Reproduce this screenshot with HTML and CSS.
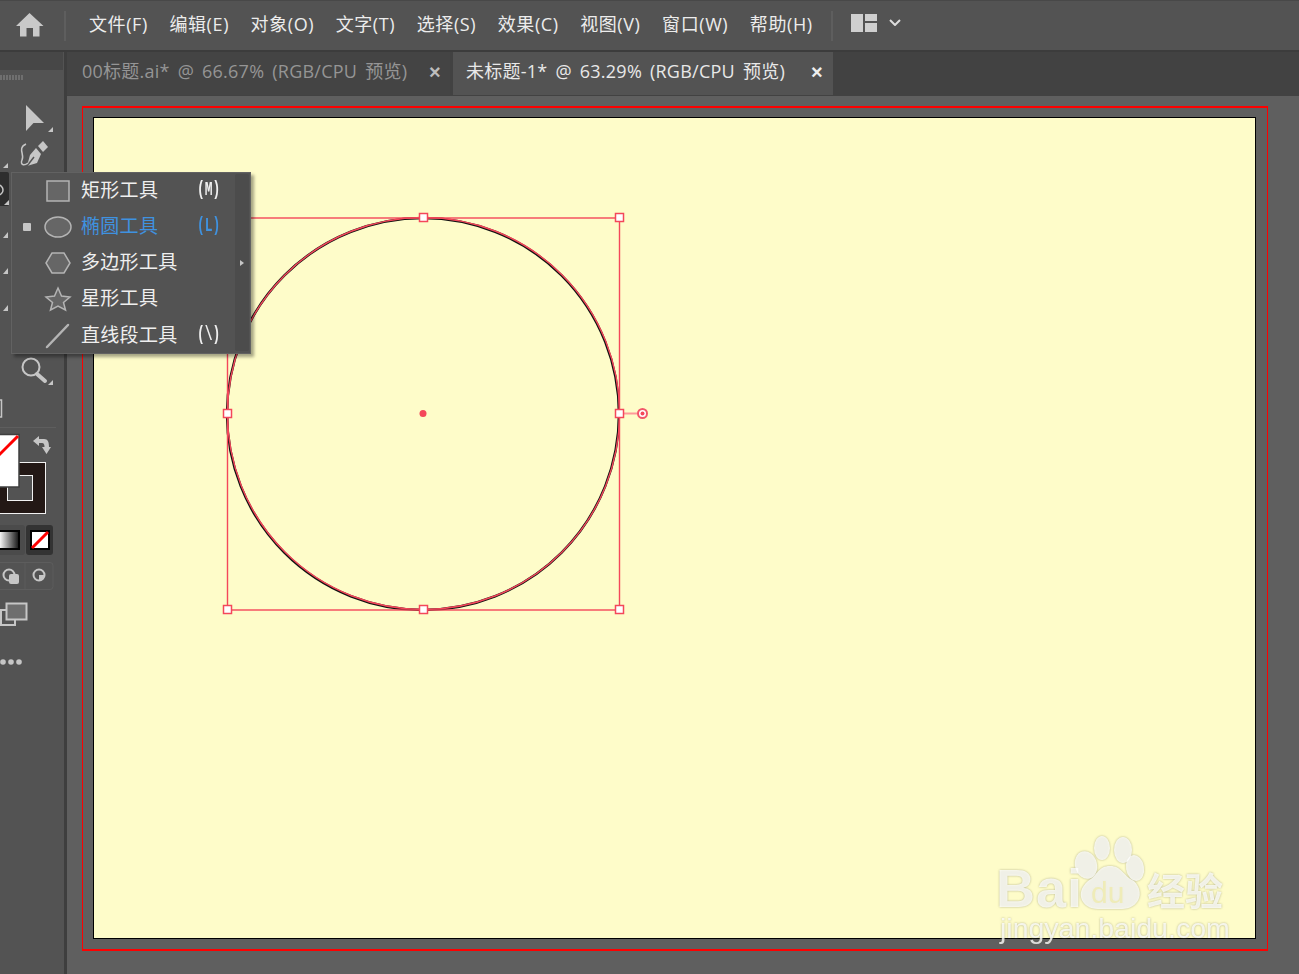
FILE: index.html
```html
<!DOCTYPE html>
<html lang="zh-CN">
<head>
    <meta charset="UTF-8">
    <title>Adobe Illustrator</title>
    <link rel="stylesheet" href="styles.css">
</head>
<body>
<header class="menubar">
    <svg class="home" viewBox="0 0 28 24"><path d="M13.5 0 27.5 13H23.500V23.500H17V15H10.500V23.500H4V13H0Z"/></svg>
    <span class="bar-sep home-sep"></span>
    <nav class="menu">
        <span>文件(F)</span>
        <span>编辑(E)</span>
        <span>对象(O)</span>
        <span>文字(T)</span>
        <span>选择(S)</span>
        <span>效果(C)</span>
        <span>视图(V)</span>
        <span>窗口(W)</span>
        <span>帮助(H)</span>
    </nav>
    <span class="bar-sep"></span>
    <svg class="layout" viewBox="0 0 26 18"><path d="M0 0H12V18H0ZM14 0H26V7H14ZM14 9H26V18H14Z"/></svg>
    <svg class="chevron" viewBox="0 0 12 7"><path d="M1 1 6 6 11 1"/></svg>
</header>

<div class="workspace">
    <aside class="toolbar">
        <div class="toolbar-head"></div>
        <svg class="tools" viewBox="0 70 63 610">
            <!-- grip -->
            <path class="grip" d="M1 75v5M4 75v5M7 75v5M10 75v5M13 75v5M16 75v5M19 75v5M22 75v5"/>
            <!-- selection -->
            <path class="glyph" d="M26 105 44 123H33.500L26 131Z"/>
            <path class="corner" d="M53 127V132H48Z"/>
            <!-- pen -->
            <path class="glyph" d="M38 146 43 141 48 147 43 152Z"/>
            <path class="glyph" d="M36 148 41 154 37 163 27 166 30 155Z"/>
            <path class="cut" d="M27 166 34 157"/>
            <path class="line" d="M26 144C17 148 25 155 22 160 20 165 24 166 28 163"/>
            <path class="corner" d="M8 163V168H3Z"/>
            <!-- active shape tool -->
            <rect class="active" x="-4" y="172" width="13" height="34" rx="2"/>
            <circle class="line" cx="-2" cy="190" r="5"/>
            <path class="corner" d="M9 200V205H4Z"/>
            <!-- tools hidden behind the flyout -->
            <path class="corner" d="M8 232V238H3Z"/>
            <path class="corner" d="M8 268V274H3Z"/>
            <path class="corner" d="M8 305V311H3Z"/>
            <!-- zoom -->
            <circle class="line wide" cx="31" cy="367" r="8.500"/>
            <path class="line thick" d="M37 374 45 381"/>
            <path class="corner" d="M53 380V385H48Z"/>
            <rect class="line" x="-3" y="400" width="4.500" height="17"/>
            <path class="divider" d="M0 427.500H56"/>
            <!-- stroke swatch, under the fill -->
            <rect class="stroke-swatch" x="-8" y="462.500" width="53.500" height="51"/>
            <rect class="stroke-hole" x="7.500" y="475.500" width="25" height="25"/>
            <!-- fill swatch -->
            <rect class="fill-swatch" x="-8" y="434.500" width="27" height="52.500"/>
            <path class="slash" d="M-2 456 18 436"/>
            <!-- swap -->
            <path class="glyph" d="M33 441 39 436V439H44C48 439 49 442 49 447H51L46.500 454 42 447H44.500C44.500 445 44 443 42 443H39V446Z"/>
            <!-- colour modes -->
            <rect class="well" x="-4" y="525" width="29" height="30" rx="3"/>
            <rect class="well on" x="26" y="525" width="27" height="30" rx="3"/>
            <defs>
                <linearGradient id="fade">
                    <stop offset="0" stop-color="#fff"/>
                    <stop offset="1" stop-color="#111"/>
                </linearGradient>
            </defs>
            <rect x="-1" y="531" width="20" height="18" fill="url(#fade)" stroke="#000" stroke-width="2"/>
            <rect x="31" y="531" width="18" height="18" fill="#fff" stroke="#000" stroke-width="2"/>
            <path class="slash" d="M32 548 48 532"/>
            <!-- draw modes -->
            <rect class="outline" x="-4" y="562.500" width="57" height="27" rx="3"/>
            <path class="outline" d="M25 563V589"/>
            <rect class="solid" x="9" y="574" width="10" height="10" rx="2"/>
            <circle class="line wide" cx="9" cy="575" r="5.500"/>
            <circle class="line wide" cx="39" cy="575" r="5.500"/>
            <path class="solid" d="M39 575H44C44 578 42 580.500 39 580.500Z"/>
            <!-- screen mode -->
            <rect class="line wide" x="1" y="610" width="14" height="15"/>
            <rect class="screen" x="6.500" y="603.500" width="20" height="16"/>
            <!-- more -->
            <circle class="solid" cx="3" cy="662" r="2.800"/>
            <circle class="solid" cx="11" cy="662" r="2.800"/>
            <circle class="solid" cx="19" cy="662" r="2.800"/>
        </svg>
    </aside>

    <main class="document">
        <div class="tabs">
            <div class="tab">
                <span>00标题.ai* @ 66.67% (RGB/CPU 预览)</span>
                <span class="close">×</span>
            </div>
            <div class="tab current">
                <span>未标题-1* @ 63.29% (RGB/CPU 预览)</span>
                <span class="close">×</span>
            </div>
        </div>
        <div class="canvas">
            <div class="bleed">
                <div class="artboard">
                    <svg class="art" viewBox="94 118 1161 820">
                        <circle class="shape" cx="423" cy="414" r="196"/>
                        <rect class="sel" x="227.500" y="218" width="392" height="392"/>
                        <circle class="sel" cx="423.500" cy="413.500" r="196"/>
                        <path class="sel-soft" d="M624 413.500H638"/>
                        <circle class="rotate" cx="642.500" cy="413.500" r="4.500"/>
                        <circle class="center" cx="642.500" cy="413.500" r="2"/>
                        <circle class="center big" cx="423" cy="413.500" r="3.500"/>
                        <rect class="handle" x="223.500" y="213.500" width="8" height="8"/>
                        <rect class="handle" x="419.500" y="213.500" width="8" height="8"/>
                        <rect class="handle" x="615.500" y="213.500" width="8" height="8"/>
                        <rect class="handle" x="223.500" y="409.500" width="8" height="8"/>
                        <rect class="handle" x="615.500" y="409.500" width="8" height="8"/>
                        <rect class="handle" x="223.500" y="605.500" width="8" height="8"/>
                        <rect class="handle" x="419.500" y="605.500" width="8" height="8"/>
                        <rect class="handle" x="615.500" y="605.500" width="8" height="8"/>
                    </svg>
                </div>
            </div>
        </div>
    </main>
</div>

<div class="flyout">
    <ul class="flyout-list">
        <li>
            <i></i>
            <svg viewBox="0 0 26 24"><rect x="2" y="2" width="22" height="20"/></svg>
            <span>矩形工具</span>
            <b>(M)</b>
        </li>
        <li class="picked">
            <i></i>
            <svg viewBox="0 0 26 24"><ellipse cx="13" cy="12" rx="13" ry="10"/></svg>
            <span>椭圆工具</span>
            <b>(L)</b>
        </li>
        <li>
            <i></i>
            <svg viewBox="0 0 26 24"><path d="M7 2H19L25 12 19 22H7L1 12Z"/></svg>
            <span>多边形工具</span>
            <b></b>
        </li>
        <li>
            <i></i>
            <svg viewBox="0 0 26 24"><path d="M13 1 16.500 9 25 10 18.500 15.500 20.500 23 13 19 5.500 23 7.500 15.500 1 10 9.500 9Z"/></svg>
            <span>星形工具</span>
            <b></b>
        </li>
        <li class="last">
            <i></i>
            <svg viewBox="0 0 26 24"><path class="stroke-only" d="M2 23 23 1"/></svg>
            <span>直线段工具</span>
            <b>(\)</b>
        </li>
    </ul>
    <div class="flyout-side"><span class="tearoff"></span></div>
</div>

<svg class="watermark" viewBox="0 0 240 120">
    <ellipse cx="86" cy="32" rx="11" ry="14" transform="rotate(-15 86 32)"/>
    <ellipse cx="102" cy="15" rx="8" ry="12"/>
    <ellipse cx="123" cy="17" rx="9" ry="13"/>
    <ellipse cx="135" cy="35" rx="9" ry="13" transform="rotate(-10 135 35)"/>
    <path d="M110 33C122 33 122 42 134 48 146 60 138 76 122 76H98C82 76 74 60 88 48 98 42 98 33 110 33Z"/>
    <text class="wm-latin" x="-4" y="74">Bai</text>
    <text class="wm-du" x="91" y="70">du</text>
    <text class="wm-cjk" x="147" y="72">经验</text>
    <text class="wm-url" x="0" y="105">jingyan.baidu.com</text>
</svg>
</body>
</html>
```

FILE: styles.css
```css
* {
    margin: 0;
    padding: 0;
    box-sizing: border-box;
}

body {
    width: 100vw;
    height: 100vh;
    overflow: hidden;
    display: flex;
    flex-direction: column;
    background: #535353;
    font-family: "Open Sans", "Noto Sans CJK SC", sans-serif;
}

/* top bar */
.menubar {
    height: 52px;
    flex: none;
    display: flex;
    align-items: center;
    background: #535353;
    border-top: 1px solid #484848;
    border-bottom: 2px solid #3c3c3c;
    padding-left: 16px;
}

.home {
    width: 28px;
    height: 24px;
    margin-top: -1px;
    fill: #c9c9c9;
}

.bar-sep {
    width: 2px;
    height: 30px;
    background: #5e5e5e;
}

.home-sep {
    margin: 0 23px 0 20px;
}

.menu {
    display: flex;
    gap: 21.500px;
    margin: -4px 18px 0 0;
    color: #ececec;
    font-size: 18px;
    line-height: 24px;
    letter-spacing: 0.6px;
}

.layout {
    width: 26px;
    height: 18px;
    margin: -6px 12px 0 18px;
    fill: #cfcfcf;
}

.chevron {
    width: 12px;
    height: 7px;
    margin-top: -6px;
    fill: none;
    stroke: #dcdcdc;
    stroke-width: 2;
}

.workspace {
    flex: 1;
    min-height: 0;
    display: flex;
}

/* left tools */
.toolbar {
    width: 67px;
    flex: none;
    background: #535353;
    border-right: 3px solid #3e3e3e;
    padding-right: 1px;
}

.toolbar-head {
    height: 18px;
    background: #474747;
}

.tools {
    display: block;
    width: 63px;
    height: 610px;
    overflow: hidden;
}

.grip {
    fill: none;
    stroke: #8c8c8c;
}

.glyph {
    fill: #c6c6c6;
}

.cut {
    fill: none;
    stroke: #535353;
    stroke-width: 1.500;
}

.corner {
    fill: #c6c6c6;
}

.line {
    fill: none;
    stroke: #c6c6c6;
    stroke-width: 1.500;
}

.wide {
    stroke-width: 2;
}

.thick {
    stroke-width: 4;
    stroke-linecap: round;
}

.active {
    fill: #2e2e2e;
}

.divider {
    fill: none;
    stroke: #5e5e5e;
}

.stroke-swatch {
    fill: #231815;
    stroke: #f2f2f2;
}

.stroke-hole {
    fill: #535353;
    stroke: #f2f2f2;
}

.fill-swatch {
    fill: #fff;
    stroke: #3f3f3f;
    stroke-width: 1.500;
}

.slash {
    fill: none;
    stroke: #f00;
    stroke-width: 3;
}

.well {
    fill: #4b4b4b;
}

.well.on {
    fill: #333;
}

.outline {
    fill: none;
    stroke: #5d5d5d;
}

.solid {
    fill: #c6c6c6;
}

.screen {
    fill: #6e6e6e;
    stroke: #c6c6c6;
    stroke-width: 2;
}

/* document area */
.document {
    flex: 1;
    min-width: 0;
    display: flex;
    flex-direction: column;
    background: #5f5f5f;
}

.tabs {
    height: 44px;
    flex: none;
    display: flex;
    background: #424242;
    font-size: 18px;
    word-spacing: 3px;
    letter-spacing: 0.25px;
}

.tab {
    width: 383px;
    height: 43px;
    margin-right: 3px;
    padding: 0 9px 8px 15px;
    display: flex;
    justify-content: space-between;
    align-items: center;
    background: #444;
    color: #959595;
    white-space: nowrap;
}

.tab.current {
    width: 380px;
    padding: 0 10px 8px 13px;
    background: #535353;
    color: #e8e8e8;
}

.close {
    font-family: "Liberation Sans", sans-serif;
    font-size: 20px;
    font-weight: bold;
    color: #bdbdbd;
    padding-top: 6px;
}

.current .close {
    color: #eee;
}

.canvas {
    flex: 1;
    min-height: 0;
    display: flex;
    padding: 10px 31px 23px 15px;
}

.bleed {
    flex: 1;
    display: flex;
    padding: 9px 11px 10px 10px;
    border: 1px solid #f00;
    border-width: 2px 1px;
}

.artboard {
    flex: 1;
    position: relative;
    background: #fefcc9;
    border: 1px solid #000;
}

.art {
    position: absolute;
    inset: 0;
    width: 100%;
    height: 100%;
}

.shape {
    fill: none;
    stroke: #111;
    stroke-width: 2.500;
}

.sel {
    fill: none;
    stroke: #f4475a;
    stroke-width: 1.400;
}

.sel-soft {
    fill: none;
    stroke: #f99;
    stroke-width: 2;
}

.rotate {
    fill: #fff;
    stroke: #f2576a;
    stroke-width: 2;
}

.center {
    fill: #f4475a;
}

.handle {
    fill: #fff;
    stroke: #f4475a;
    stroke-width: 1.500;
}

/* shape tools flyout */
.flyout {
    position: absolute;
    left: 11px;
    top: 172px;
    width: 240px;
    height: 182px;
    display: flex;
    background: #535353;
    border: 1px solid #626262;
    box-shadow: 3px 3px 3px rgba(0, 0, 0, 0.35);
    color: #efefef;
    font-size: 19px;
}

.flyout-list {
    flex: 1;
    list-style: none;
}

.flyout-list li {
    height: 36px;
    padding-bottom: 4px;
    display: flex;
    align-items: center;
}

.flyout-list .last {
    height: 37px;
    padding-bottom: 3px;
}

.flyout-list i {
    width: 8px;
    height: 8px;
    margin: 4px 14px 0 11px;
    border-radius: 1px;
}

.flyout-list svg {
    width: 26px;
    height: 24px;
    margin: 4px 10px 0 0;
    fill: #666;
    stroke: #b4b4b4;
    stroke-width: 1.500;
    overflow: visible;
}

.flyout-list span {
    width: 116px;
    white-space: nowrap;
    letter-spacing: 0.3px;
}

/* narrow half-width shortcut letters */
.flyout-list b {
    font-family: "Liberation Mono", monospace;
    font-weight: bold;
    font-size: 13px;
    transform: scaleY(1.55);
}

.flyout-list .stroke-only {
    stroke-width: 2.500;
    stroke-linecap: round;
}

.flyout-list .picked {
    color: #3f92e0;
}

.picked i {
    background: #c6c6c6;
}

.flyout-side {
    width: 14px;
    margin: 1px 1px 2px 0;
    display: flex;
    align-items: center;
    justify-content: center;
    background: #4c4c4c;
    border-radius: 2px;
}

.tearoff {
    width: 0;
    height: 0;
    border-left: 4px solid #c6c6c6;
    border-top: 3px solid transparent;
    border-bottom: 3px solid transparent;
}

/* photo site watermark */
.watermark {
    position: absolute;
    left: 1000px;
    top: 833px;
    width: 240px;
    height: 120px;
    fill: rgba(255, 255, 255, 0.78);
    overflow: visible;
    filter: drop-shadow(0 0 1px rgba(110, 110, 80, 0.6));
}

.wm-latin {
    font-family: "Liberation Sans", sans-serif;
    font-weight: bold;
    font-size: 54px;
    letter-spacing: 1px;
}

.wm-du {
    font-family: "Liberation Sans", sans-serif;
    font-size: 30px;
    fill: #efecb8;
}

.wm-cjk {
    font-family: "Noto Sans CJK SC", sans-serif;
    font-size: 38px;
    font-weight: bold;
}

.wm-url {
    font-family: "Liberation Sans", sans-serif;
    font-size: 28.500px;
}
```
